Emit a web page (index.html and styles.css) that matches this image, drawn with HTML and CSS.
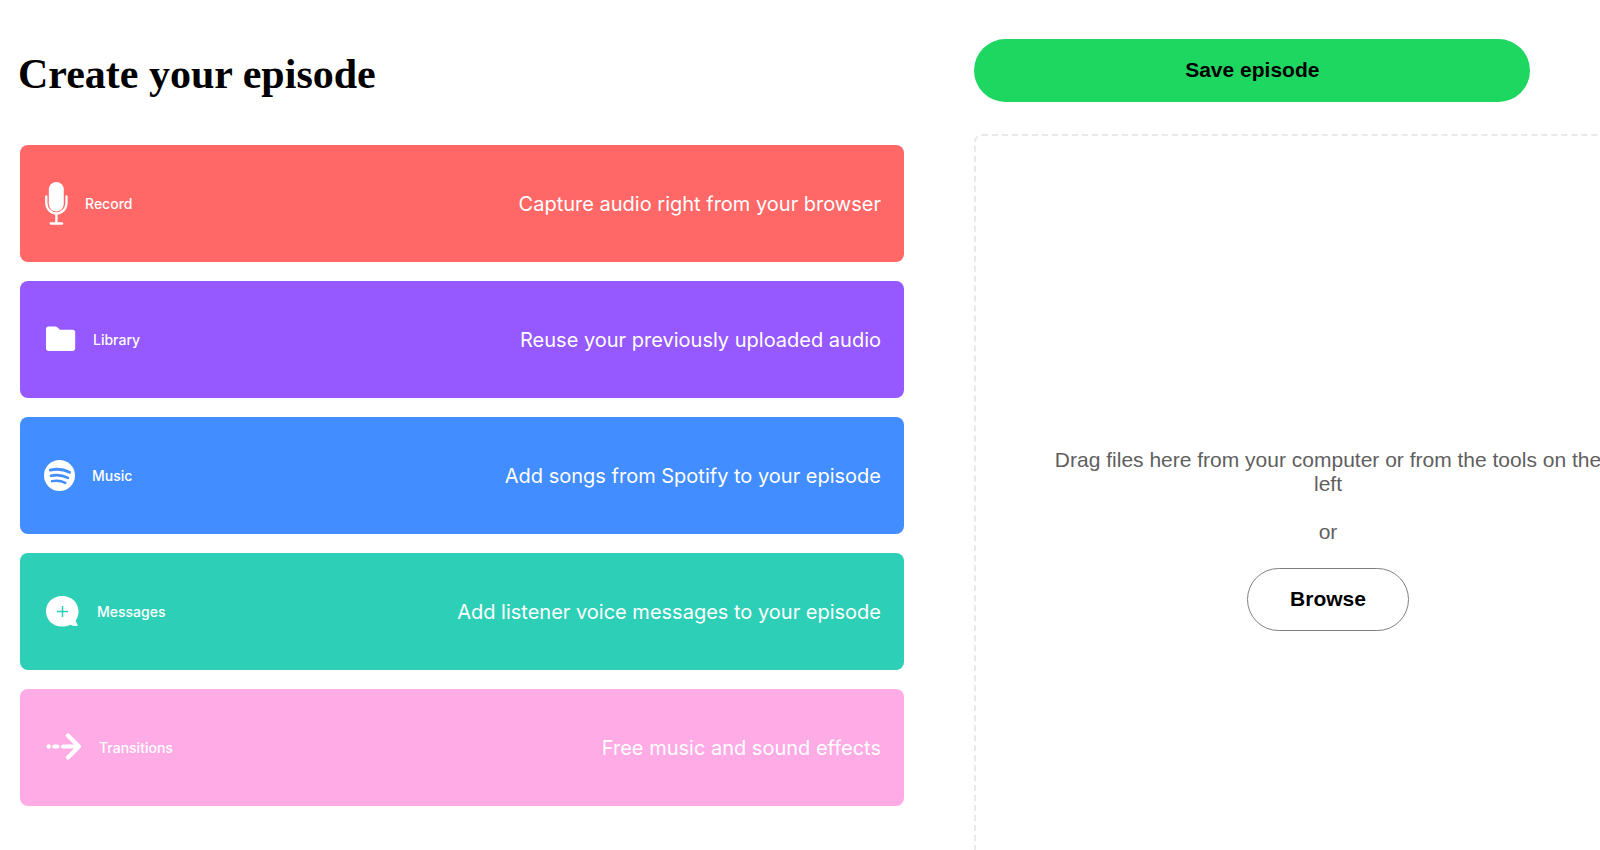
FILE: index.html
```html
<!DOCTYPE html>
<html lang="en">

<head>
    <meta charset="UTF-8">
    <meta name="viewport" content="width=device-width, initial-scale=1.0">
    <title>Create your episode</title>
    <link rel="stylesheet" href="styles.css">
</head>

<body>
    <div class="main">
        <div class="tools">
            <h1>Create your episode</h1>
            <button type="button" class="card record">
                <svg width="24" height="44" viewBox="0 0 24 44" aria-hidden="true">
                    <rect x="4.800" y="0" width="15" height="29.500" rx="7.500" fill="#fff" />
                    <path d="M2.300 14.500v6.500a10.100 10.500 0 0 0 20.200 0v-6.500M12.400 31.500v9.500M6.700 41.500h11.500" fill="none" stroke="#fff" stroke-width="2.300" stroke-linecap="round" />
                </svg>
                <span class="name">Record</span>
                <span class="text">Capture audio right from your browser</span>
            </button>
            <button type="button" class="card library">
                <svg width="32" height="28" viewBox="0 0 32 28" aria-hidden="true">
                    <path d="M4.500 .5h6.500q1.500 0 2.500 1l2.500 2.300h12.500q2.700 0 2.700 2.700v15.700q0 2.700-2.700 2.700H4.700Q2 24.900 2 22.200V3.200Q2 .5 4.500 .5z" fill="#fff" />
                </svg>
                <span class="name">Library</span>
                <span class="text">Reuse your previously uploaded audio</span>
            </button>
            <button type="button" class="card music">
                <svg width="31" height="32" viewBox="0 0 31 32" aria-hidden="true">
                    <circle cx="15.500" cy="15.500" r="15.500" fill="#fff" />
                    <g fill="none" stroke="#428dff" stroke-linecap="round">
                        <path d="M6.300 10.100q10.500-2.300 19.200 2.200" stroke-width="2.900" />
                        <path d="M7 15.800q9-2 16.900 2" stroke-width="2.600" />
                        <path d="M8 21.200q7-1.600 13.300 1.700" stroke-width="2.400" />
                    </g>
                </svg>
                <span class="name">Music</span>
                <span class="text">Add songs from Spotify to your episode</span>
            </button>
            <button type="button" class="card messages">
                <svg width="36" height="32" viewBox="0 0 36 32" aria-hidden="true">
                    <path d="M18.200 0C9 0 2 6.500 2 15.200s7 15.300 16.200 15.300c3.300 0 6-.7 8.300-1.800 2 1 4.300 1.500 6.500 1.100.8-.1 1-.9.5-1.400-1-1-1.600-2.500-1.700-4.100 1.800-2.500 2.700-5.600 2.700-9.100C34.500 6.500 27.400 0 18.200 0z" fill="#fff" />
                    <path d="M18.500 10v11M13 15.500h11" stroke="#2dd0b6" stroke-width="1.500" />
                </svg>
                <span class="name">Messages</span>
                <span class="text">Add listener voice messages to your episode</span>
            </button>
            <button type="button" class="card transitions">
                <svg width="38" height="30" viewBox="0 0 38 30" aria-hidden="true">
                    <circle cx="4.700" cy="13.500" r="2.200" fill="#fff" />
                    <path d="M10.200 13.500h3.300M19 13.500h16M24 2.500l11 11-11 11" fill="none" stroke="#fff" stroke-width="4.200" stroke-linecap="round" stroke-linejoin="round" />
                </svg>
                <span class="name">Transitions</span>
                <span class="text">Free music and sound effects</span>
            </button>
        </div>
        <div class="episode">
            <button type="button" class="save">Save episode</button>
            <div class="drop">
                <p>Drag files here from your computer or from the tools on the left</p>
                <p>or</p>
                <button type="button" class="browse">Browse</button>
            </div>
        </div>
    </div>
</body>

</html>
```

FILE: styles.css
```css
* {
    box-sizing: border-box;
    margin: 0;
    padding: 0;
}

body {
    height: 100vh;
    overflow: hidden;
    background-color: #fff;
    font-family: "Liberation Sans", Arial, sans-serif;
}

/* the episode column runs past the right edge of the window */
.main {
    display: grid;
    grid-template-columns: 56.5% 44.2%;
    column-gap: 4.4%;
    align-items: start;
}

.tools {
    display: flex;
    flex-direction: column;
    gap: 19px;
    padding-left: 20px;
}

.tools h1 {
    margin: 50px 0 28px -2px;
    font-family: "Liberation Serif", "Times New Roman", serif;
    font-size: 42px;
    line-height: 48px;
}

.card {
    display: flex;
    align-items: center;
    gap: 17px;
    height: 117px;
    padding: 0 23px 0 24px;
    border: none;
    border-radius: 8px;
    color: #fff;
    font-family: Inter, sans-serif;
    cursor: pointer;
}

.card svg {
    flex: none;
}

.card .name {
    font-size: 14px;
    font-weight: 500;
}

.card .text {
    margin-left: auto;
    font-size: 20px;
}

.record {
    background-color: #ff6867;
}

.library {
    background-color: #9658ff;
}

.music {
    background-color: #428dff;
}

.messages {
    background-color: #2dd0b6;
}

.transitions {
    background-color: #ffabe6;
}

.episode {
    padding-top: 39px;
}

.save,
.browse {
    height: 63px;
    padding-bottom: 2px;
    border-radius: 32px;
    color: #000;
    font-family: inherit;
    font-size: 21px;
    font-weight: bold;
    cursor: pointer;
}

.save {
    display: block;
    width: 78.6%;
    margin-bottom: 32px;
    border: none;
    background-color: #1ed760;
}

.drop {
    display: flex;
    flex-direction: column;
    align-items: center;
    justify-content: center;
    gap: 24px;
    min-height: 811px;
    padding: 0 64px;
    border: 2px dashed #e9e9eb;
    border-radius: 8px;
    color: #5f5f5f;
    font-size: 21px;
    line-height: 24px;
    text-align: center;
}

.browse {
    width: 162px;
    border: 1px solid #7f7f7f;
    background-color: #fff;
}
```
